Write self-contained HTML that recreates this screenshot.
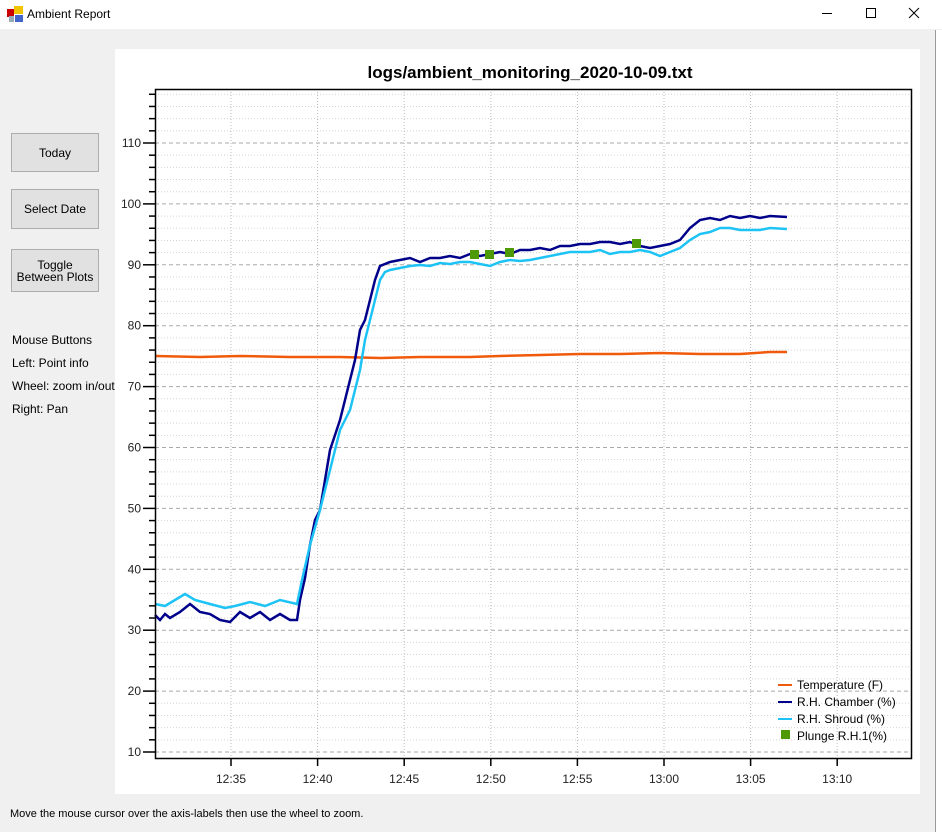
<!DOCTYPE html>
<html><head><meta charset="utf-8"><style>
body{margin:0;width:942px;height:832px;background:#f0f0f0;font-family:"Liberation Sans",sans-serif;position:relative;overflow:hidden}
.title{position:absolute;left:0;top:0;width:942px;height:29px;background:#fff}
.btn{position:absolute;left:11px;width:86px;background:#e1e1e1;border:1px solid #adadad;font-size:12px;text-align:center;display:flex;align-items:center;justify-content:center;line-height:12px;color:#000}
.lbl{position:absolute;left:12px;font-size:12px;color:#000}
</style></head><body>
<div class="title">
<svg width="16" height="16" style="position:absolute;left:7px;top:6px"><rect x="0" y="3" width="7" height="8" fill="#c00"/><rect x="7" y="0" width="9" height="8" fill="#f2c400"/><rect x="2" y="10" width="5" height="6" fill="#9ab"/><rect x="8" y="9" width="8" height="7" fill="#46c"/></svg>
<span style="position:absolute;left:27px;top:7px;font-size:12px">Ambient Report</span>
<svg width="120" height="29" style="position:absolute;left:822px;top:0"><line x1="0" y1="13.5" x2="10" y2="13.5" stroke="#000"/><rect x="44.5" y="8.5" width="9" height="9" fill="none" stroke="#000"/><path d="M87 8 L97 18 M97 8 L87 18" stroke="#000"/></svg>
</div>
<div class="btn" style="top:133px;height:37px">Today</div>
<div class="btn" style="top:189px;height:38px">Select Date</div>
<div class="btn" style="top:249px;height:41px">Toggle<br>Between Plots</div>
<div class="lbl" style="top:333px">Mouse Buttons</div>
<div class="lbl" style="top:356px">Left: Point info</div>
<div class="lbl" style="top:379px">Wheel: zoom in/out</div>
<div class="lbl" style="top:402px">Right: Pan</div>
<div class="lbl" style="top:808px;left:10px;font-size:11px">Move the mouse cursor over the axis-labels then use the wheel to zoom.</div>
<div style="position:absolute;left:935px;top:30px;width:7px;height:802px;background:#fff;border-left:1px solid #999"></div>
<svg width="942" height="832" style="position:absolute;left:0;top:0">
<rect x="115" y="49" width="805" height="745" fill="#fff"/>
<text x="530" y="78" font-size="17" font-weight="bold" text-anchor="middle" font-family="Liberation Sans">logs/ambient_monitoring_2020-10-09.txt</text>
<g id="g"></g>
<polyline fill="none" stroke="#f05a0a" stroke-width="2.5" points="155,356 200,357 240,356 290,357 340,357 380,358 420,357 470,357 500,356 540,355 580,354 620,354 660,353 700,354 740,354 770,352 787,352"/>
<polyline fill="none" stroke="#00008b" stroke-width="2.5" points="155,615 160,620 165,614 170,618 180,612 190,604 200,612 210,614 220,620 230,622 240,612 250,618 260,612 270,620 280,614 290,620 297,620 300,600 305,578 310,545 315,520 320,510 325,480 330,450 340,420 345,400 350,380 355,360 360,330 365,320 370,300 375,280 380,266 390,262 400,260 410,258 420,262 430,258 440,258 450,256 460,258 470,254 480,256 490,254 500,252 510,254 520,250 530,250 540,248 550,250 560,246 570,246 580,244 590,244 600,242 610,242 620,244 630,242 640,246 650,248 660,246 670,244 680,240 690,228 700,220 710,218 720,220 730,216 740,218 750,216 760,218 770,216 787,217"/>
<polyline fill="none" stroke="#1ec3f5" stroke-width="2.5" points="155,604 165,606 175,600 185,594 195,600 210,604 225,608 235,606 250,602 265,606 280,600 297,604 302,580 310,545 320,510 330,470 340,430 350,410 360,370 365,340 370,320 375,300 380,280 385,272 390,270 400,268 410,266 420,265 430,266 440,263 450,264 460,262 470,262 480,264 490,266 500,262 510,260 520,261 530,260 540,258 550,256 560,254 570,252 580,252 590,252 600,250 610,254 620,252 630,252 640,250 650,252 660,256 670,252 680,248 690,240 700,234 710,232 720,228 730,228 740,230 750,230 760,230 770,228 787,229"/>
<g fill="#4e9a06"><rect x="470" y="250" width="9" height="9"/><rect x="485" y="250" width="9" height="9"/><rect x="505" y="248" width="9" height="9"/><rect x="632" y="239" width="9" height="9"/></g>
<rect x="155.5" y="89.5" width="756" height="669" fill="none" stroke="#000" stroke-width="1.5"/>
<g id="t"></g>
<g font-size="12" font-family="Liberation Sans">
<line x1="778" x2="792" y1="685" y2="685" stroke="#f05a0a" stroke-width="2"/><text x="797" y="689">Temperature (F)</text>
<line x1="778" x2="792" y1="702" y2="702" stroke="#00008b" stroke-width="2"/><text x="797" y="706">R.H. Chamber (%)</text>
<line x1="778" x2="792" y1="719" y2="719" stroke="#1ec3f5" stroke-width="2"/><text x="797" y="723">R.H. Shroud (%)</text>
<rect x="781" y="730" width="9" height="9" fill="#4e9a06"/><text x="797" y="740">Plunge R.H.1(%)</text>
</g>
</svg>
<script>
var ns="http://www.w3.org/2000/svg",g=document.getElementById("g"),t=document.getElementById("t");
function el(p,n,a,tx){var e=document.createElementNS(ns,n);for(var k in a)e.setAttribute(k,a[k]);if(tx)e.textContent=tx;p.appendChild(e);}
function Y(v){return 752-(v-10)*6.09;}
for(var v=10;v<=118;v+=2){var y=Y(v);var maj=v%10==0;
el(g,"line",{x1:155,x2:912,y1:y,y2:y,stroke:maj?"#aaa":"#d4d4d4","stroke-dasharray":maj?"4,3":"1,2"});
el(t,"line",{x1:maj?143:149,x2:155,y1:y,y2:y,stroke:"#000","stroke-width":1.5});
if(maj)el(t,"text",{x:141,y:y+4,"font-size":12,"text-anchor":"end","font-family":"Liberation Sans",fill:"#222"},""+v);}
var labs=["12:35","12:40","12:45","12:50","12:55","13:00","13:05","13:10"];
for(var i=0;i<8;i++){var x=231+i*86.6;
el(g,"line",{x1:x,x2:x,y1:89,y2:758,stroke:"#bbb","stroke-dasharray":"1,2"});
el(t,"line",{x1:x,x2:x,y1:758,y2:766,stroke:"#000","stroke-width":1.5});
el(t,"text",{x:x,y:783,"font-size":12,"text-anchor":"middle","font-family":"Liberation Sans",fill:"#222"},labs[i]);}
</script>
</body></html>
